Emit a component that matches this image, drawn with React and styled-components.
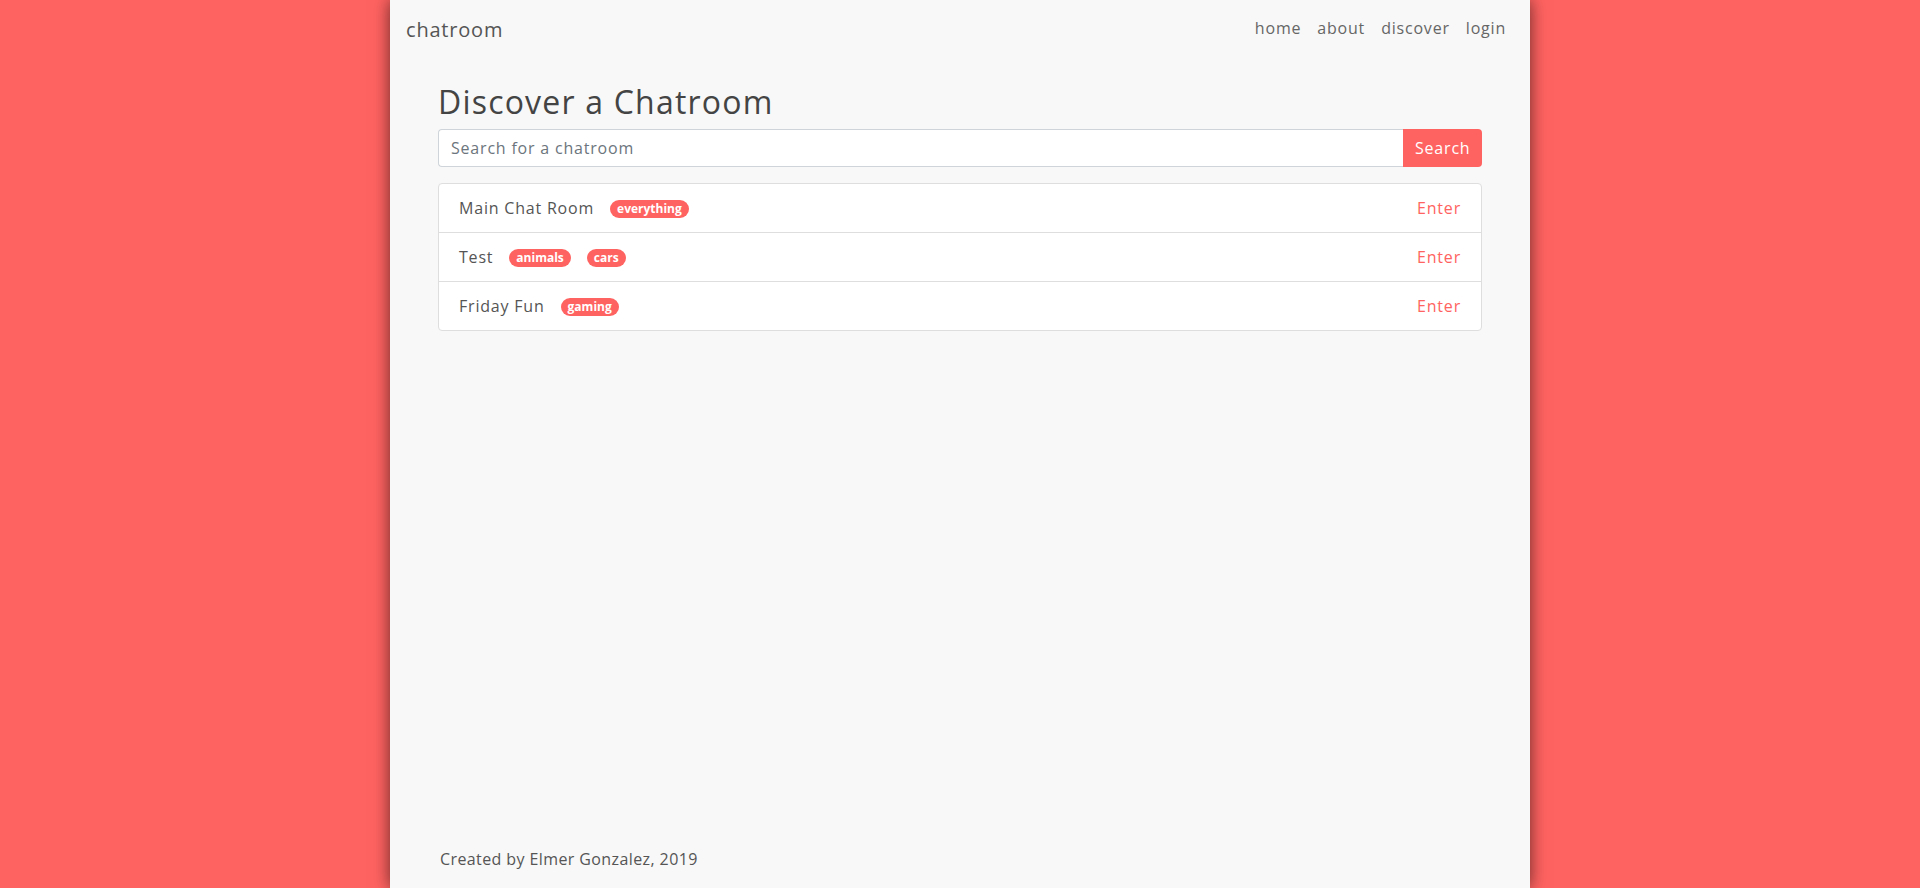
import React from "react";
import styled, { createGlobalStyle } from "styled-components";

const RED = "#ff6361";

const Global = createGlobalStyle`
  html, body { margin: 0; padding: 0; }
  body {
    background: ${RED};
    font-family: "Open Sans", "Liberation Sans", sans-serif;
    letter-spacing: 0.8px;
    color: #555;
  }
  * { box-sizing: border-box; }
`;

const Page = styled.div`
  width: 1140px;
  min-height: 100vh;
  margin: 0 auto;
  background: #f8f8f8;
  box-shadow: 0 0 16px rgba(0, 0, 0, 0.6);
  display: flex;
  flex-direction: column;
`;

const Navbar = styled.nav`
  display: flex;
  align-items: center;
  justify-content: space-between;
  padding: 8px 16px;
`;

const Brand = styled.a`
  font-size: 20px;
  line-height: 30px;
  padding: 7px 0 3px;
  color: #555;
  text-decoration: none;
`;

const NavList = styled.div`
  display: flex;
`;

const NavLink = styled.a`
  font-size: 16px;
  line-height: 24px;
  padding: 8px 8px;
  color: #666;
  text-decoration: none;
`;

const Main = styled.main`
  flex: 1;
  padding: 27px 48px 0;
`;

const Title = styled.h2`
  margin: 0 0 8px;
  font-size: 32px;
  font-weight: 400;
  line-height: 38px;
  letter-spacing: 1.2px;
  color: #444;
`;

const SearchGroup = styled.div`
  display: flex;
  height: 38px;
`;

const SearchInput = styled.input`
  flex: 1;
  height: 38px;
  border: 1px solid #ced4da;
  border-right: none;
  border-radius: 4px 0 0 4px;
  padding: 6px 12px;
  font-family: inherit;
  letter-spacing: inherit;
  font-size: 16px;
  color: #495057;
  background: #fff;
  outline: none;
  &::placeholder { color: #6c757d; }
`;

const SearchButton = styled.button`
  width: 79px;
  border: none;
  border-radius: 0 4px 4px 0;
  background: ${RED};
  color: #fff;
  font-family: inherit;
  letter-spacing: inherit;
  font-size: 16px;
  padding: 6px 12px;
`;

const List = styled.ul`
  list-style: none;
  margin: 16px 0 0;
  padding: 0;
  border: 1px solid #dedede;
  border-radius: 4px;
  background: #fff;
`;

const Item = styled.li`
  display: flex;
  align-items: center;
  justify-content: space-between;
  padding: 12px 20px;
  line-height: 24px;
  font-size: 16px;
  & + & { border-top: 1px solid #dedede; }
`;

const RoomInfo = styled.div`
  display: flex;
  align-items: center;
  gap: 16px;
  color: #555;
`;

const Badge = styled.span`
  display: inline-block;
  background: ${RED};
  color: #fff;
  font-size: 12px;
  font-weight: 700;
  line-height: 12px;
  letter-spacing: 0;
  padding: 3px 7px 3px;
  border-radius: 10rem;
  margin-top: 2px;
`;

const EnterLink = styled.a`
  color: ${RED};
  text-decoration: none;
`;

const Footer = styled.footer`
  padding: 0 48px 17px 50px;
  font-size: 16px;
  line-height: 24px;
  letter-spacing: 0.4px;
  color: #555;
`;

const rooms = [
  { name: "Main Chat Room", tags: ["everything"] },
  { name: "Test", tags: ["animals", "cars"] },
  { name: "Friday Fun", tags: ["gaming"] },
];

export default function App() {
  return (
    <>
      <Global />
      <Page>
        <Navbar>
          <Brand href="#">chatroom</Brand>
          <NavList>
            <NavLink href="#">home</NavLink>
            <NavLink href="#">about</NavLink>
            <NavLink href="#">discover</NavLink>
            <NavLink href="#">login</NavLink>
          </NavList>
        </Navbar>
        <Main>
          <Title>Discover a Chatroom</Title>
          <SearchGroup>
            <SearchInput placeholder="Search for a chatroom" />
            <SearchButton>Search</SearchButton>
          </SearchGroup>
          <List>
            {rooms.map((r) => (
              <Item key={r.name}>
                <RoomInfo>
                  <span>{r.name}</span>
                  {r.tags.map((t) => (
                    <Badge key={t}>{t}</Badge>
                  ))}
                </RoomInfo>
                <EnterLink href="#">Enter</EnterLink>
              </Item>
            ))}
          </List>
        </Main>
        <Footer>Created by Elmer Gonzalez, 2019</Footer>
      </Page>
    </>
  );
}
